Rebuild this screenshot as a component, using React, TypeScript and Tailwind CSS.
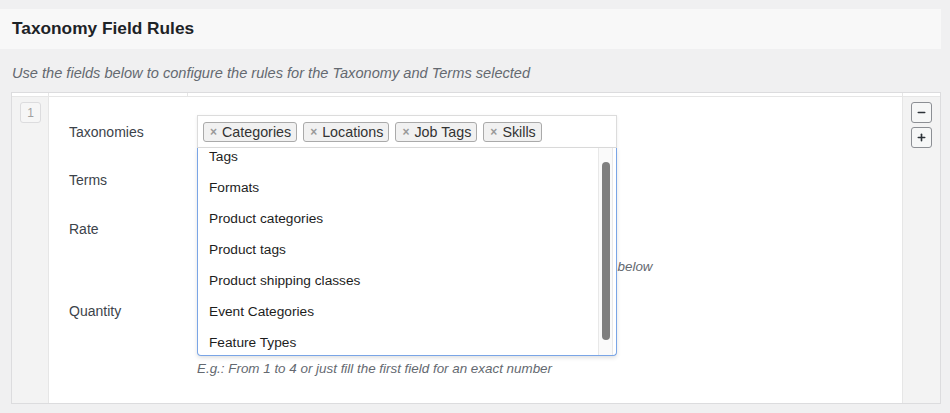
import { Minus, Plus } from 'lucide-react';

const selected = ['Categories', 'Locations', 'Job Tags', 'Skills'];

const options = [
  'Tags',
  'Formats',
  'Product categories',
  'Product tags',
  'Product shipping classes',
  'Event Categories',
  'Feature Types',
];

const Tag = ({ label }: { label: string }) => (
  <span className="flex h-[20px] items-center gap-[5px] rounded-[3px] border border-[#aaaaaa] bg-[#f1f1f1] pl-[6px] pr-[5px] text-[14.3px] leading-none text-[#333]">
    <span className="text-[12px] font-bold text-[#999]">×</span>
    {label}
  </span>
);

const TaxonomySelect = () => (
  <div className="relative w-[420px]">
    <div className="flex h-[33px] items-center gap-[6px] border border-[#dcdcdc] bg-white px-[5px] pt-[1px] shadow-[0_1px_3px_rgba(0,0,0,0.08)]">
      {selected.map((s) => (
        <Tag key={s} label={s} />
      ))}
    </div>

    {/* open dropdown */}
    <div className="absolute left-0 top-full z-10 flex h-[208px] w-full overflow-hidden rounded-b-[4px] border border-t-0 border-[#7aa5e6] bg-white shadow-[0_2px_4px_rgba(0,0,0,0.12)]">
      <ul className="-mt-[6px] flex-1">
        {options.map((o) => (
          <li key={o} className="flex h-[31px] items-center pl-[11px] text-[13.7px] text-[#1d1d1d]">
            {o}
          </li>
        ))}
      </ul>
      <div className="mr-[3px] flex w-[15px] justify-center border-x border-[#e8e8e8] bg-[#fafafa] pt-[14px]">
        <div className="h-[178px] w-[8px] rounded-full bg-[#7f7f7f]" />
      </div>
    </div>
  </div>
);

const Input = ({ w = 'w-[400px]' }: { w?: string }) => (
  <div className={`h-[28px] ${w} rounded-[4px] border border-[#8c8f94] bg-white`} />
);

const App = () => {
  return (
    <div className="min-h-screen bg-[#f0f0f1] pr-[9px] pt-[9px] font-['Liberation_Sans',Arial,sans-serif]">
      <div className="flex h-[40px] items-center bg-[#f8f8f8] px-[12px]">
        <h2 className="text-[17.3px] font-bold text-[#1d2327]">Taxonomy Field Rules</h2>
      </div>

      <p className="mt-[16px] pl-[12px] text-[14.6px] italic leading-[16px] text-[#646970]">
        Use the fields below to configure the rules for the Taxonomy and Terms selected
      </p>

      <div className="ml-[11px] mt-[11px] border border-[#dcdcde]">
        <div className="flex h-[4px] border-b border-[#e6e6e6] bg-white">
          <div className="w-[37px] border-r border-[#e6e6e6]" />
          <div className="w-[139px] border-r border-[#e6e6e6]" />
          <div className="flex-1 border-r border-[#e6e6e6]" />
          <div className="w-[37px]" />
        </div>

        <div className="flex">
          <div className="w-[37px] border-r border-[#e6e6e6] bg-[#f3f3f3] pl-[8px] pt-[5px]">
            <div className="flex h-[21px] w-[21px] items-center justify-center rounded-[3px] border border-[#dcdcde] bg-[#f6f6f6] text-[12px] text-[#a0a0a0]">
              1
            </div>
          </div>

          <div className="flex-1 bg-white pb-[26px] pl-[20px] pt-[18px] text-[14px] text-[#3c434a]">
            <div className="flex items-center">
              <span className="w-[128px] pt-[2px]">Taxonomies</span>
              <TaxonomySelect />
            </div>

            <div className="mt-[16px] flex h-[33px] items-center">
              <span className="w-[128px]">Terms</span>
              <div className="h-[33px] w-[400px] border border-[#dcdcdc] bg-white" />
            </div>

            <div className="mt-[16px] flex h-[33px] items-center">
              <span className="w-[128px]">Rate</span>
              <Input w="w-[180px]" />
            </div>
            <p className="ml-[128px] mt-[13px] text-[13.4px] italic leading-[16px] text-[#646970]">
              Enter a fixed amount or a percentage of the price for the terms chosen below
            </p>

            <div className="mt-[26px] flex items-start">
              <span className="w-[128px] leading-[20px]">Quantity</span>
              <div className="-mt-[7px] flex flex-col gap-[4px]">
                <Input w="w-[180px]" />
                <Input w="w-[180px]" />
              </div>
            </div>
            <p className="ml-[128px] mt-[7px] text-[13.4px] italic leading-[16px] text-[#646970]">
              E.g.: From 1 to 4 or just fill the first field for an exact number
            </p>
          </div>

          <div className="flex w-[38px] flex-col items-center gap-[4px] border-l border-[#e6e6e6] bg-[#f3f3f3] pt-[5px]">
            <button className="flex h-[21px] w-[21px] items-center justify-center rounded-[3px] border border-[#8c8f94] bg-[#f6f7f7] text-[#2c3338]">
              <Minus size={11} strokeWidth={3.5} />
            </button>
            <button className="flex h-[21px] w-[21px] items-center justify-center rounded-[3px] border border-[#8c8f94] bg-[#f6f7f7] text-[#2c3338]">
              <Plus size={11} strokeWidth={3.5} />
            </button>
          </div>
        </div>
      </div>
    </div>
  );
};

export default App;
